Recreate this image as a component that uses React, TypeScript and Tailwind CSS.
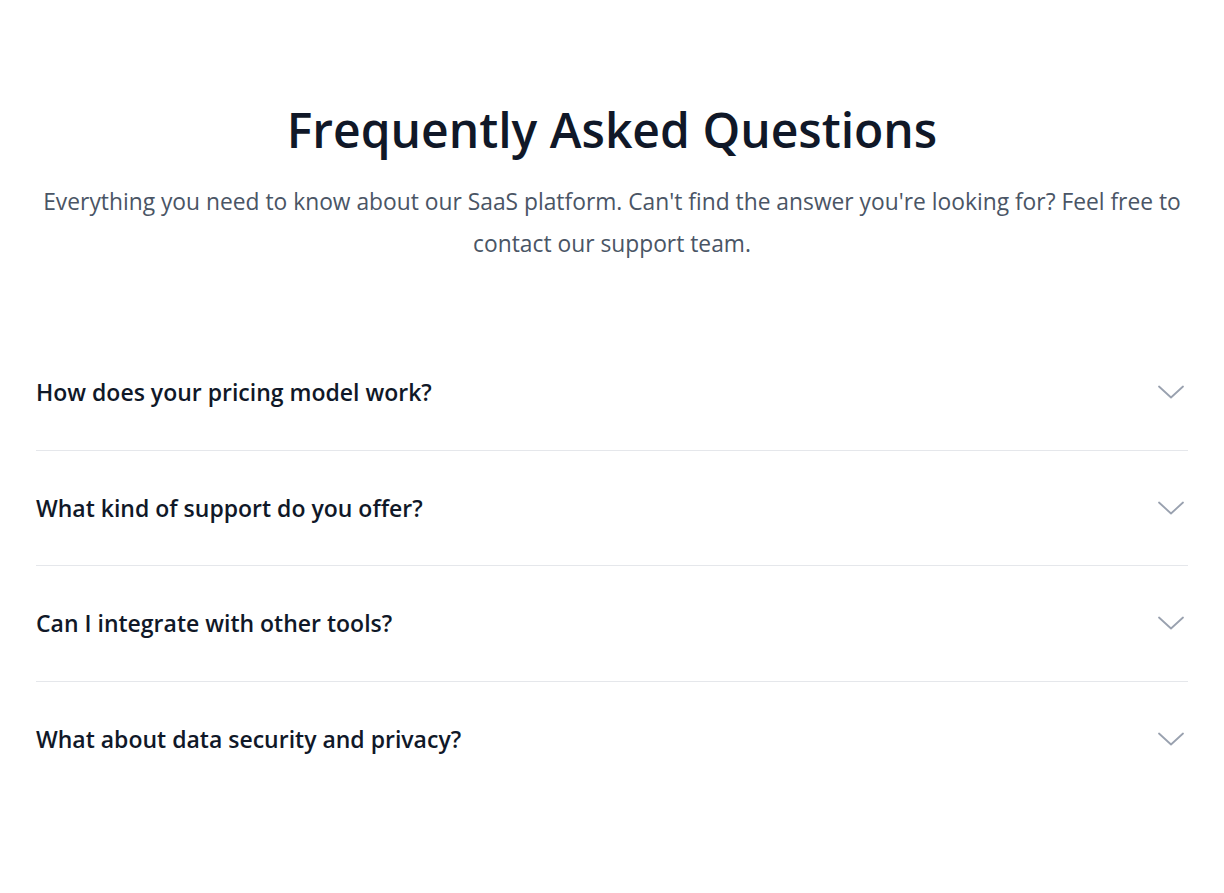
import { useState } from "react";

const faqs = [
  {
    q: "How does your pricing model work?",
    a: "We offer simple monthly and annual plans based on the number of seats your team needs. You can upgrade, downgrade or cancel at any time.",
  },
  {
    q: "What kind of support do you offer?",
    a: "All plans include email support. Business and Enterprise customers also get priority chat support and a dedicated account manager.",
  },
  {
    q: "Can I integrate with other tools?",
    a: "Yes. We connect with popular tools like Slack, GitHub, Zapier and more, and our REST API lets you build your own integrations.",
  },
  {
    q: "What about data security and privacy?",
    a: "Your data is encrypted in transit and at rest, and we follow industry best practices to keep it safe and private.",
  },
];

function Chevron({ open }: { open: boolean }) {
  return (
    <svg
      width="26"
      height="14"
      viewBox="0 0 26 14"
      fill="none"
      className={`shrink-0 text-gray-400 transition-transform ${open ? "rotate-180" : ""}`}
    >
      <path d="M1 1.5l12 11 12-11" stroke="currentColor" strokeWidth="1.8" strokeLinecap="round" strokeLinejoin="round" />
    </svg>
  );
}

export default function App() {
  const [open, setOpen] = useState<number | null>(null);

  return (
    <div className="min-h-screen bg-white font-['Open_Sans',sans-serif]">
      <section className="mx-auto max-w-6xl pt-[100px] pb-20">
        {/* Header */}
        <div className="text-center">
          <h2 className="text-5xl leading-[60px] font-semibold text-gray-900">Frequently Asked Questions</h2>
          <p className="mt-[21px] text-[22.8px] leading-[42px] text-gray-600">
            Everything you need to know about our SaaS platform. Can't find the answer you're looking for? Feel free to
            contact our support team.
          </p>
        </div>

        {/* Questions */}
        <div className="mt-[70px]">
          {faqs.map((item, i) => (
            <div key={item.q} className={i < faqs.length - 1 ? "border-b border-gray-200" : ""}>
              <button
                onClick={() => setOpen(open === i ? null : i)}
                className="flex w-full items-center justify-between py-[43.3px] pr-1 text-left"
              >
                <span className="text-[23px] leading-7 font-semibold text-gray-900">{item.q}</span>
                <Chevron open={open === i} />
              </button>
              {open === i && <p className="-mt-6 pb-8 text-base text-gray-600">{item.a}</p>}
            </div>
          ))}
        </div>
      </section>
    </div>
  );
}
